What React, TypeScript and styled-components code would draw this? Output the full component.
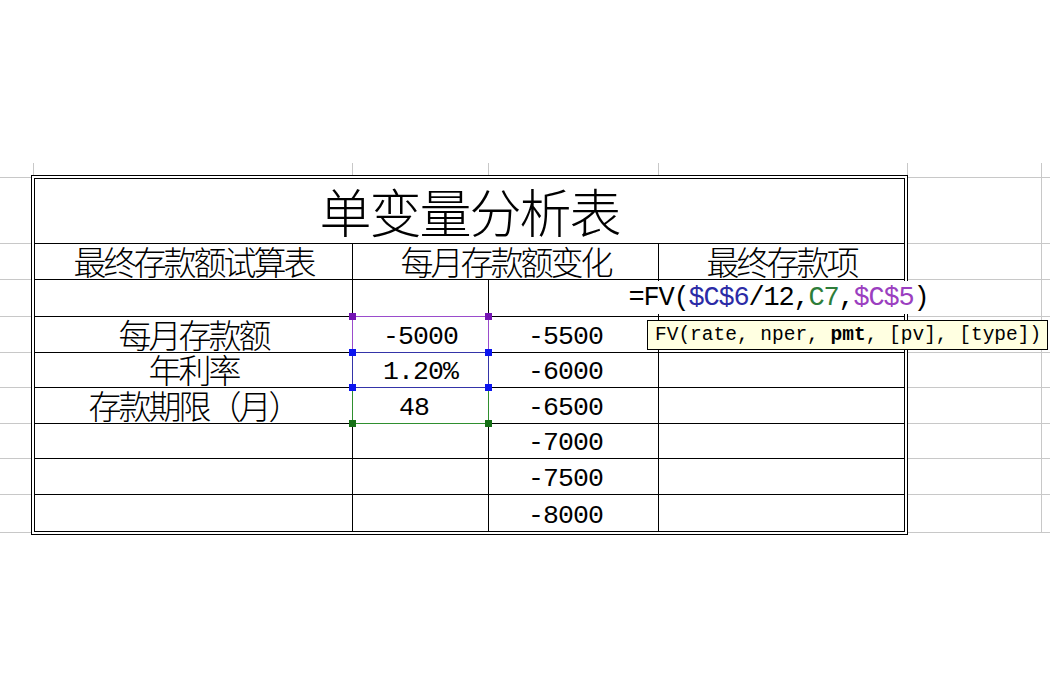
import React from "react";
import styled, { createGlobalStyle } from "styled-components";

const Global = createGlobalStyle`
  html, body { margin: 0; padding: 0; background: #ffffff; }
  body {
    width: 1050px;
    height: 700px;
    overflow: hidden;
    font-family: "Noto Sans CJK SC", sans-serif;
    color: #000;
  }
`;

const Page = styled.div`
  width: 1050px;
  height: 700px;
  padding-top: 163px;
  box-sizing: border-box;
  background: #fff;
`;

const Sheet = styled.div`
  display: grid;
  grid-template-columns: 34px 319px 136px 170px 249px 134px 1fr;
  grid-template-rows: 15px 66px 36px 37px 36px 35px 36px 35px 36px 38px;
`;

const GridCell = styled.div<{ $col: number; $row: number; $last?: boolean }>`
  grid-column: ${(p) => p.$col};
  grid-row: ${(p) => p.$row};
  box-sizing: border-box;
  border-bottom: 1px solid #c8c8c8;
  border-right: ${(p) => (p.$last ? "none" : "1px solid #c8c8c8")};
`;

const Frame = styled.div`
  grid-column: 2 / 6;
  grid-row: 2 / 11;
  margin: -3px 0 -2px -3px;
  border: 1px solid #000;
  padding: 2px;
  background: #fff;
`;

const Table = styled.div`
  display: grid;
  grid-template-columns: 317px 135px 169px 245px;
  grid-template-rows: 64px 35px 36px 35px 34px 35px 34px 35px 36px;
  gap: 1px;
  background: #000;
  border: 1px solid #000;
`;

const Cell = styled.div<{ $span?: number; $padRight?: number }>`
  grid-column: span ${(p) => p.$span ?? 1};
  position: relative;
  background: #fff;
  display: flex;
  align-items: flex-end;
  justify-content: center;
  min-width: 0;
  box-sizing: border-box;
  padding-right: ${(p) => p.$padRight ?? 0}px;
  white-space: nowrap;
`;

const Title = styled.span`
  font-family: "Noto Sans CJK SC", sans-serif;
  font-weight: 300;
  font-size: 52px;
  letter-spacing: -2px;
  line-height: 1;
  margin-bottom: 6px;
`;

const Label = styled.span`
  font-family: "Noto Sans CJK SC", sans-serif;
  font-weight: 300;
  font-size: 33px;
  letter-spacing: -3px;
  line-height: 1;
  margin-bottom: 1px;
`;

const Num = styled.span`
  font-family: "Liberation Mono", "DejaVu Sans Mono", monospace;
  font-size: 26.5px;
  letter-spacing: -0.9px;
  line-height: 1;
  margin-bottom: 2px;
`;

const Highlight = styled.div<{ $line: string; $z: number }>`
  position: absolute;
  inset: -1px;
  border: 1px solid ${(p) => p.$line};
  z-index: ${(p) => p.$z};
  pointer-events: none;
`;

const Handle = styled.span<{ $fill: string; $v: "top" | "bottom"; $h: "left" | "right" }>`
  position: absolute;
  width: 7px;
  height: 7px;
  background: ${(p) => p.$fill};
  ${(p) => p.$v}: -4px;
  ${(p) => p.$h}: -4px;
`;

const Editor = styled.div`
  position: absolute;
  left: -37px;
  top: 1px;
  width: 313px;
  height: 33px;
  box-sizing: border-box;
  padding-bottom: 2px;
  background: #fff;
  display: flex;
  align-items: flex-end;
  justify-content: center;
  font-family: "Liberation Mono", "DejaVu Sans Mono", monospace;
  font-size: 27px;
  letter-spacing: -1.2px;
  line-height: 1;
  white-space: nowrap;
  z-index: 4;
`;

const Ref = styled.span<{ $color: string }>`
  color: ${(p) => p.$color};
`;

const Tooltip = styled.div`
  position: absolute;
  left: -12px;
  top: 40px;
  width: 401px;
  height: 30px;
  box-sizing: border-box;
  padding: 1px 0 0 7px;
  background: #ffffe1;
  border: 1px solid #000;
  font-family: "Liberation Mono", "DejaVu Sans Mono", monospace;
  font-size: 19.5px;
  line-height: 27px;
  white-space: nowrap;
  z-index: 5;
`;

const Strong = styled.b`
  font-weight: 700;
`;

type Sel = { line: string; fill: string; z: number };

const SelBox: React.FC<{ sel: Sel }> = ({ sel }) => (
  <Highlight $line={sel.line} $z={sel.z}>
    <Handle $fill={sel.fill} $v="top" $h="left" />
    <Handle $fill={sel.fill} $v="top" $h="right" />
    <Handle $fill={sel.fill} $v="bottom" $h="left" />
    <Handle $fill={sel.fill} $v="bottom" $h="right" />
  </Highlight>
);

const purple: Sel = { line: "#9a4ccc", fill: "#7414b4", z: 1 };
const blue: Sel = { line: "#3434a8", fill: "#0a14f0", z: 3 };
const green: Sel = { line: "#2f8f2f", fill: "#167016", z: 2 };

const cNums = ["-7000", "-7500", "-8000"];

export default function App() {
  const outside: React.ReactNode[] = [];
  for (let c = 1; c <= 7; c++) {
    outside.push(<GridCell key={`t${c}`} $col={c} $row={1} $last={c === 7} />);
  }
  for (let r = 2; r <= 10; r++) {
    outside.push(<GridCell key={`l${r}`} $col={1} $row={r} />);
    outside.push(<GridCell key={`r${r}`} $col={6} $row={r} />);
    outside.push(<GridCell key={`e${r}`} $col={7} $row={r} $last />);
  }

  return (
    <Page>
      <Global />
      <Sheet>
        {outside}
        <Frame>
          <Table>
            <Cell $span={4}>
              <Title>单变量分析表</Title>
            </Cell>

            <Cell>
              <Label>最终存款额试算表</Label>
            </Cell>
            <Cell $span={2}>
              <Label>每月存款额变化</Label>
            </Cell>
            <Cell>
              <Label>最终存款项</Label>
            </Cell>

            <Cell />
            <Cell />
            <Cell />
            <Cell>
              <Editor>
                =FV(<Ref $color="#2b2ba6">$C$6</Ref>/12,<Ref $color="#2e7d3a">C7</Ref>,
                <Ref $color="#9b3fc0">$C$5</Ref>)
              </Editor>
              <Tooltip>
                FV(rate, nper, <Strong>pmt</Strong>, [pv], [type])
              </Tooltip>
            </Cell>

            <Cell>
              <Label>每月存款额</Label>
            </Cell>
            <Cell>
              <Num>-5000</Num>
              <SelBox sel={purple} />
            </Cell>
            <Cell $padRight={16}>
              <Num>-5500</Num>
            </Cell>
            <Cell />

            <Cell>
              <Label>年利率</Label>
            </Cell>
            <Cell>
              <Num>1.20%</Num>
              <SelBox sel={blue} />
            </Cell>
            <Cell $padRight={16}>
              <Num>-6000</Num>
            </Cell>
            <Cell />

            <Cell>
              <Label>存款期限（月）</Label>
            </Cell>
            <Cell $padRight={13}>
              <Num>48</Num>
              <SelBox sel={green} />
            </Cell>
            <Cell $padRight={16}>
              <Num>-6500</Num>
            </Cell>
            <Cell />

            {cNums.map((n) => (
              <React.Fragment key={n}>
                <Cell />
                <Cell />
                <Cell $padRight={16}>
                  <Num>{n}</Num>
                </Cell>
                <Cell />
              </React.Fragment>
            ))}
          </Table>
        </Frame>
      </Sheet>
    </Page>
  );
}
